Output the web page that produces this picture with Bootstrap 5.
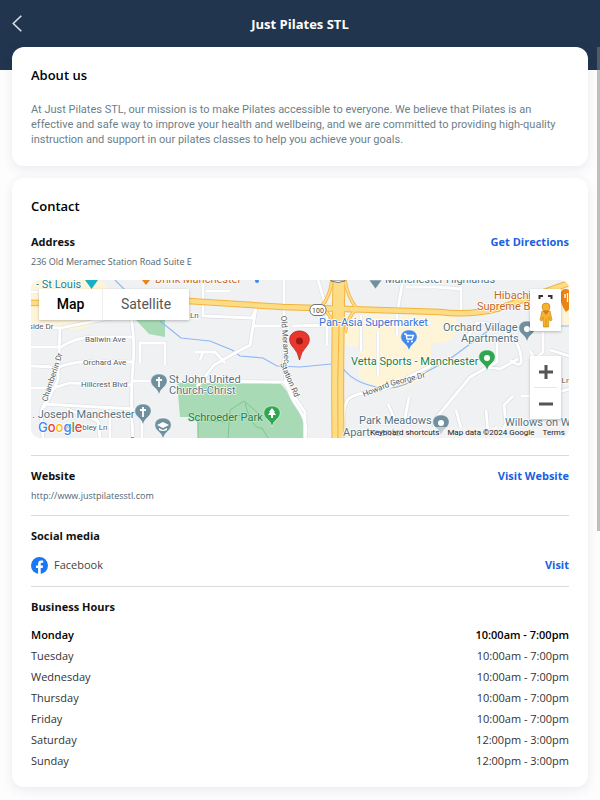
<!DOCTYPE html>
<html lang="en">
<head>
<meta charset="utf-8">
<meta name="viewport" content="width=device-width, initial-scale=1">
<title>Just Pilates STL</title>
<link href="https://cdn.jsdelivr.net/npm/bootstrap@5.3.0/dist/css/bootstrap.min.css" rel="stylesheet">
<style>
  body { font-family: "Open Sans", "Noto Sans", sans-serif; font-size: 11px; color: #111; background: #fdfdfe; overflow-x: hidden; }
  .topbar { background: #22354f; height: 70px; }
  .topbar-row { height: 47px; }
  .topbar h1 { font-size: 13px; line-height: 20px; font-weight: 700; }
  .back-btn { width: 34px; height: 46px; }
  .page-main { margin-top: -23px; }
  .panel { background: #fff; border-radius: 12px; padding: 18px 19px 16px; box-shadow: 0 3px 12px rgba(30, 40, 70, .09); margin-bottom: 12px; position: relative; }
  .panel h2 { font-size: 13px; line-height: 20px; font-weight: 600; margin: 0 0 16px; color: #000; }
  .panel h3 { font-size: 11px; line-height: 20px; font-weight: 700; margin: 0; color: #111; }
  .panel .about-title { margin-bottom: 17px; }
  .about { font-family: Roboto, sans-serif; line-height: 15px; color: #6c7f8a; padding-bottom: 3px; margin: 0; }
  .detail { font-size: 9px; line-height: 14px; color: #4f6470; margin: 3px 0 0; }
  .action { line-height: 20px; font-weight: 700; color: #1a5fe0; }
  .rule { border: 0; border-top: 1px solid #d9dbdd; opacity: 1; margin: 12px 0 10px; }
  .rule-map { margin-top: 17px; }
  .rule-social { margin-top: 10px; }
  .social { min-height: 22px; margin-top: 8px; gap: 6px; color: #444; }
  .hours { margin-top: 7px; color: #333; }
  .hours th, .hours td { height: 21px; line-height: 21px; padding: 0; font-weight: 400; }
  .hours .today th, .hours .today td { font-weight: 600; color: #000; }
  .map-box { height: 158px; margin-top: 11px; border-radius: 9px; overflow: hidden; font-family: Roboto, sans-serif; }
  .map-art { width: 100%; height: 100%; display: block; }
  .map-types { left: 8px; top: 9px; }
  .map-types button { height: 31px; border: 0; background: #fff; font-size: 14px; color: #565656; padding: 0; width: 86px; }
  .map-types button:first-child { width: 64px; color: #000; font-weight: 500; border-right: 1px solid #eee; }
  .ctl { background: #fff; box-shadow: 0 1px 3px rgba(0, 0, 0, .25); border-radius: 1px; }
  .map-tools { right: 8px; top: 9px; bottom: 19px; width: 31px; }
  .map-tools button { border: 0; background: transparent; padding: 0; width: 31px; display: flex; justify-content: center; align-items: center; }
  .full-btn { height: 10px; }
  .peg-btn { height: 32px; }
  .zoom-btn { height: 31px; }
  .zoom-split { height: 1px; background: #e6e6e6; margin: 0 4px; }
  .map-legal { right: 0; bottom: 0; height: 11px; font-size: 8px; line-height: 11px; color: #222; background: rgba(245, 245, 245, .6); }
  .map-legal button { border: 0; background: transparent; padding: 0; color: inherit; line-height: 11px; }
  .map-legal a { color: inherit; text-decoration: none; }
  .scroll-thumb { top: 47px; right: 0; width: 3px; height: 484px; background: rgba(128, 128, 128, .5); }
</style>
</head>
<body>
<header class="topbar">
  <div class="topbar-row position-relative d-flex align-items-center justify-content-center">
    <button class="back-btn btn p-0 border-0 position-absolute start-0 top-0" aria-label="Back">
      <svg width="34" height="46" fill="none" stroke="#d9dee5" stroke-width="1.6"><path d="M21.3 15.7 13.3 23.5 21.3 31.3"/></svg>
    </button>
    <h1 class="m-0 text-white">Just Pilates STL</h1>
  </div>
</header>
<main class="page-main px-0 mx-2">
 <div class="px-1">
  <section class="panel">
    <h2 class="about-title">About us</h2>
    <p class="about">At Just Pilates STL, our mission is to make Pilates accessible to everyone. We believe that Pilates is an<br> effective and safe way to improve your health and wellbeing, and we are committed to providing high-quality<br> instruction and support in our pilates classes to help you achieve your goals.</p>
  </section>
  <section class="panel">
    <h2>Contact</h2>
    <div class="d-flex justify-content-between"><h3>Address</h3><a class="action text-decoration-none" href="#directions">Get Directions</a></div>
    <p class="detail">236 Old Meramec Station Road Suite E</p>
    <div class="map-box position-relative">
      <svg class="map-art" viewBox="31 280 538 158" preserveAspectRatio="xMidYMid slice" role="img" aria-label="Map of Manchester">
        <defs>
          <path id="drop" d="M0 13Q-1 8-5 5C-11 0-8-8 0-8S11 0 5 5Q1 8 0 13Z"/>
          <path id="lanes" d="M31 326 60 328 105 319 135 315M60 328 58 380 44 408M31 347H61Q76 337 94 337H132M31 366 59 367Q74 361 98 361L133 362M31 388H53L70 383 133 385M43 438 41 412 44 404 134 409M127 300Q136 330 133 365T133 438M140 363V343H165V365M133 381H178L284 382 305 412V438M203 280V316L252 318 256 308 250 345 233 354 214 365 197 387M206 291H230M195 352H215L225 363M203 352 200 360M253 326H285M284 280V363Q285 390 297 406T305 438M293 326 331 325M318 280 327 310V345M361 315V351M403 280 397 313V335M406 287H436L461 289M461 287V314M406 323H431M378 331V376M344 438Q341 402 351 397T385 389L440 361M388 404 395 420M409 397 405 418M497 338V362L470 377 436 418 432 438M503 342Q515 332 520 352T510 360M530 351 540 367M543 332V352L535 359M467 338 476 323Q503 322 510 340M550 350 569 356M485 366 500 369 518 359M456 410 461 428M486 410 488 432 497 427M513 396 504 405 506 424 497 438M521 396H544L569 389M67 409 98 421 100 438M110 414V438M142 410V438M31 292H44V319"/>
        </defs>
        <rect x="31" y="280" width="538" height="158" fill="#eff1f3"/>
        <path d="M31 280H101L110 291V318L82 329H31ZM345 315H448Q458 315 458 329Q454 343 438 343H431V372L412 385 387 391 359 378V347L345 345ZM548 298H569V326H548Z" fill="#fef5d9"/>
        <path d="M136 320H165V337L149 334ZM177 383H280L304 412V438H198L197 417H180Z" fill="#a8dab5"/>
        <path d="M228 438 230 410 244 401 258 413M199 420 225 422 240 415M245 403Q252 430 262 428L268 438M198 438V417" fill="none" stroke="#7fc492" stroke-width="1"/>
        <path d="M115 280 128 293M160 321 181 338 210 341 232 350 240 356 263 358 277 366 300 367 331 364M342 367Q352 382 376 387T421 375L439 365M447 361 500 322M543 326H569" fill="none" stroke="#90b8f5" stroke-width="1.2"/>
        <use href="#lanes" fill="none" stroke="#dcdfe3" stroke-width="4.2"/>
        <use href="#lanes" fill="none" stroke="#fff" stroke-width="2.8"/>
        <g fill="none" stroke-linejoin="round">
          <path d="M31 303 188 301 283 307 440 312Q470 316 500 308L569 283M338 280V438" stroke="#f5b23c" stroke-width="6.5"/>
          <path d="M332 280Q330 297 321 307 331 313 336 333M345 280Q347 296 357 309 348 315 345 333" stroke="#f5b23c" stroke-width="3.5"/>
          <path d="M339 280Q337 370 338 438" stroke="#f5b23c" stroke-width="13"/>
          <path d="M31 303 188 301 283 307 440 312Q470 316 500 308L569 283" stroke="#fddc86" stroke-width="4.5"/>
          <path d="M332 280Q330 297 321 307 331 313 336 333M345 280Q347 296 357 309 348 315 345 333" stroke="#fddc86" stroke-width="2"/>
          <path d="M339 280Q337 370 338 438" stroke="#fddc86" stroke-width="11"/>
          <path d="M339 326Q337 380 338 438" stroke="#f5b23c" stroke-width="1"/>
        </g>
        <rect x="310" y="304.500" width="16" height="11" rx="5" fill="#fff" stroke="#6f7378"/>
        <path d="M331 280H345V281Q338 284 331 281Z" fill="#fff" stroke="#6f7378"/>
        <text x="318" y="313" font-size="7" text-anchor="middle" fill="#444">100</text>
        <g font-size="8" fill="#565b60" stroke="#fff" stroke-width="1.5" paint-order="stroke" stroke-linejoin="round">
          <text x="25" y="329">yside Dr</text><text x="85" y="342">Ballwin Ave</text><text x="83" y="365">Orchard Ave</text><text x="81" y="387">Hillcrest Blvd</text>
          <text x="190" y="318">Ln</text><text x="64" y="430">Wembley Ln</text><text x="130" y="442">S</text><text x="557" y="383">t Ln</text>
          <text transform="translate(47 402) rotate(-72)">Chamberlin Dr</text>
          <text transform="translate(281 316) rotate(86)">Old Meramec</text><text transform="translate(280 364) rotate(66)">Station Rd</text>
          <text transform="translate(364 397) rotate(-22)">Howard</text><text transform="translate(391 386) rotate(-14)">George Dr</text>
        </g>
        <g font-size="11" stroke="#fff" stroke-width="1.5" paint-order="stroke" stroke-linejoin="round">
          <g fill="#53727f">
            <text x="169" y="383">St John United</text><text x="169" y="394">Church-Christ</text><text x="32" y="418">. Joseph Manchester</text>
            <text x="443" y="331">Orchard Village</text><text x="461" y="342">Apartments</text><text x="359" y="424">Park Meadows</text><text x="343" y="436">Apartments</text>
            <text x="505" y="426">Willows on West</text><text x="385" y="283">Manchester Highlands</text>
          </g>
          <text x="36" y="288" fill="#168391">- St Louis</text>
          <g fill="#c5661e"><text x="155" y="283">Drink Manchester</text><text x="494" y="299">Hibachi</text><text x="477" y="310">Supreme Buffet</text></g>
          <text x="319" y="326" fill="#3672d7">Pan-Asia Supermarket</text>
          <g fill="#218044"><text x="351" y="365">Vetta Sports - Manchester</text><text x="188" y="421" stroke="#c4e6cd">Schroeder Park</text></g>
        </g>
        <g fill="#71909e" stroke="#fff" stroke-width=".5">
          <use href="#drop" x="159" y="382"/><use href="#drop" x="143" y="412"/><use href="#drop" x="163" y="426"/><use href="#drop" x="527" y="329"/><use href="#drop" x="441" y="423"/>
          <path d="M369 280H382L375.500 289Z"/>
        </g>
        <path d="M85 280H98L91.500 289Z" fill="#17afc5"/><path d="M142 280H150L146 285ZM565 289C574 289 576 306 566 312 559 303 558 290 565 289Z" fill="#ee8315"/><path d="M565 294V298M567.500 293V302" stroke="#fff" stroke-width="1.300"/><circle cx="257" cy="281" r="2" fill="#4788ee"/>
        <path d="M159 377V387M156 380H162M143 407V417M140 410H146" stroke="#fff" stroke-width="1.800"/>
        <path d="M157 425 163 422 169 425 163 428ZM159 428V430Q163 432 167 430V428L163 430Z" fill="#fff"/>
        <g fill="#fff"><circle cx="527" cy="329" r="3"/><circle cx="441" cy="423" r="3"/></g>
        <g stroke="#fff" stroke-width=".5"><use href="#drop" x="409" y="338" fill="#4788ee"/><use href="#drop" x="487" y="358" fill="#30a650"/><use href="#drop" x="272" y="414" fill="#30a650"/></g>
        <circle cx="487" cy="358" r="3" fill="#fff"/>
        <path d="M404 334H406L407 339H412L413.500 335.500H407" fill="none" stroke="#fff" stroke-width="1.300"/><circle cx="408" cy="341.500" r="1" fill="#fff"/><circle cx="412" cy="341.500" r="1" fill="#fff"/>
        <path d="M272 408 275 412H274L276 415H273V418H271V415H268L270 412H269Z" fill="#fff"/>
        <path d="M299.500 360Q298 352 293 347C286 339 291 331 299.500 331S313 339 306 347Q301 352 299.500 360Z" fill="#e8382e" stroke="#b8231c" stroke-width=".8"/><circle cx="299.500" cy="341" r="3.500" fill="#9d1813"/>
        <text x="38" y="432" font-size="13" font-weight="500" font-family="Inter, sans-serif" stroke="#fff" stroke-width="1.5" paint-order="stroke" stroke-linejoin="round"><tspan fill="#4285f4">G</tspan><tspan fill="#ea4335">o</tspan><tspan fill="#fbbc05">o</tspan><tspan fill="#4285f4">g</tspan><tspan fill="#34a853">l</tspan><tspan fill="#ea4335">e</tspan></text>
      </svg>
      <div class="map-types ctl position-absolute d-flex"><button>Map</button><button>Satellite</button></div>
      <div class="map-tools position-absolute d-flex flex-column justify-content-between">
        <div class="ctl">
          <button class="full-btn align-items-end" aria-label="Toggle fullscreen"><svg class="mt-auto" width="15" height="4" fill="none" stroke="#333" stroke-width="2"><path d="M1.500 4V1H5M10 1H13.500V4"/></svg></button>
          <button class="peg-btn" aria-label="Street View"><svg width="16" height="28" viewBox="0 0 16 28"><circle cx="8" cy="6" r="4" fill="#f7b32b" stroke="#c98817" stroke-width=".7"/><path d="M4 10H12L14 19 12 20 11 16 10.500 26H5.500L5 16 4 20 2 19Z" fill="#f7b32b" stroke="#c98817" stroke-width=".7"/><path d="M5 10H11L8 14Z" fill="#dc7228"/><path d="M8 18V26" stroke="#c98817" stroke-width=".7"/></svg></button>
        </div>
        <div class="ctl">
          <button class="zoom-btn" aria-label="Zoom in"><svg width="16" height="16" stroke="#555" stroke-width="3"><path d="M8 1V15M1 8H15"/></svg></button>
          <div class="zoom-split"></div>
          <button class="zoom-btn" aria-label="Zoom out"><svg width="16" height="16" stroke="#555" stroke-width="3"><path d="M1 8H15"/></svg></button>
        </div>
      </div>
      <div class="map-legal position-absolute d-flex gap-2 pe-1"><button>Keyboard shortcuts</button><span>Map data ©2024 Google</span><a href="#terms">Terms</a></div>
    </div>
    <hr class="rule rule-map">
    <div class="d-flex justify-content-between"><h3>Website</h3><a class="action text-decoration-none" href="#website">Visit Website</a></div>
    <p class="detail">http://www.justpilatesstl.com</p>
    <hr class="rule">
    <h3>Social media</h3>
    <div class="social d-flex align-items-center">
      <svg width="17" height="17" viewBox="0 0 24 24"><circle cx="12" cy="12" r="12" fill="#1877f2"/><path d="M10 24V15.600H7V12.100H10V9.500C10 6.500 11.800 4.800 14.500 4.800 15.800 4.800 17.200 5 17.200 5V8H15.700C14.200 8 13.700 8.900 13.700 9.900V12.100H17L16.500 15.600H13.700V24Z" fill="#fff"/></svg>
      <span>Facebook</span><a class="action text-decoration-none ms-auto" href="#facebook">Visit</a>
    </div>
    <hr class="rule rule-social">
    <h3>Business Hours</h3>
    <table class="hours w-100">
      <tbody>
        <tr class="today"><th scope="row">Monday</th><td class="text-end">10:00am - 7:00pm</td></tr>
        <tr><th scope="row">Tuesday</th><td class="text-end">10:00am - 7:00pm</td></tr>
        <tr><th scope="row">Wednesday</th><td class="text-end">10:00am - 7:00pm</td></tr>
        <tr><th scope="row">Thursday</th><td class="text-end">10:00am - 7:00pm</td></tr>
        <tr><th scope="row">Friday</th><td class="text-end">10:00am - 7:00pm</td></tr>
        <tr><th scope="row">Saturday</th><td class="text-end">12:00pm - 3:00pm</td></tr>
        <tr><th scope="row">Sunday</th><td class="text-end">12:00pm - 3:00pm</td></tr>
      </tbody>
    </table>
  </section>
 </div>
</main>
<div class="scroll-thumb position-fixed"></div>
<script src="https://cdn.jsdelivr.net/npm/bootstrap@5.3.0/dist/js/bootstrap.bundle.min.js"></script>
</body>
</html>
